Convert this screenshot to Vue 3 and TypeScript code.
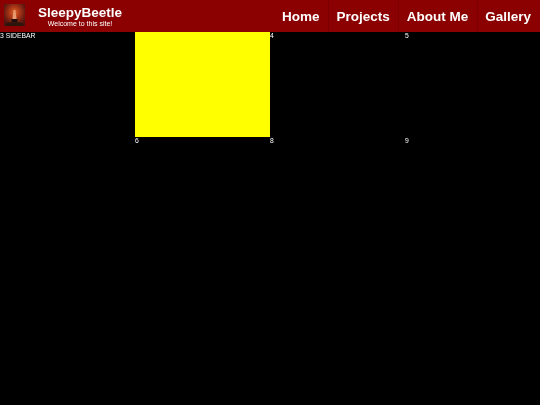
<script setup lang="ts">
const navItems: string[] = ['Home', 'Projects', 'About Me', 'Gallery']
</script>

<template>
  <div class="page">
    <header class="header">
      <svg class="logo" viewBox="0 0 21 22" role="img" aria-label="SleepyBeetle logo">
        <defs>
          <radialGradient id="glow" cx="50%" cy="38%" r="65%">
            <stop offset="0" stop-color="#e0682c" />
            <stop offset="0.35" stop-color="#b03a18" />
            <stop offset="0.75" stop-color="#6c1c10" />
            <stop offset="1" stop-color="#481410" />
          </radialGradient>
          <filter id="soft" x="-10%" y="-10%" width="120%" height="120%">
            <feGaussianBlur stdDeviation="0.7" />
          </filter>
        </defs>
        <rect width="21" height="22" fill="url(#glow)" />
        <g filter="url(#soft)">
          <path d="M9.6 6 L11.4 6 L12.6 15 L8.4 15 Z" fill="#e89a70" />
          <path d="M1 22 L4 18.5 L17 18.5 L20 22 Z" fill="#2a120c" />
          <rect x="7.5" y="15" width="6" height="3.5" fill="#221008" />
        </g>
      </svg>
      <div class="brand">
        <div class="title">SleepyBeetle</div>
        <div class="tagline">Welcome to this site!</div>
      </div>
      <nav class="nav">
        <a v-for="item in navItems" :key="item" class="nav-item">{{ item }}</a>
      </nav>
    </header>
    <main class="grid">
      <div class="cell sidebar">3 SIDEBAR</div>
      <div class="cell feature"></div>
      <div class="cell">4</div>
      <div class="cell">5</div>
      <div class="cell">6</div>
      <div class="cell">8</div>
      <div class="cell">9</div>
    </main>
  </div>
</template>

<style>
html, body { margin: 0; background: #000; }
</style>

<style scoped>
.page {
  width: 540px;
  height: 405px;
  overflow: hidden;
  background: #000;
  color: #fff;
  font-family: "Liberation Sans", Arial, sans-serif;
  will-change: transform;
}
.header {
  height: 32px;
  display: flex;
  align-items: center;
  background: #8b0000;
  padding-left: 4px;
  box-sizing: border-box;
}
.logo {
  width: 21px;
  height: 22px;
  flex: none;
  margin-bottom: 2px;
}
.brand {
  width: 110px;
  text-align: center;
}
.title {
  font-size: 13.5px;
  font-weight: bold;
  line-height: 15px;
}
.tagline {
  font-size: 7px;
  line-height: 8px;
}
.nav {
  margin-left: auto;
  height: 100%;
  display: flex;
}
.nav-item {
  display: flex;
  align-items: center;
  padding: 0 8.5px;
  font-size: 13.5px;
  font-weight: bold;
  box-shadow: inset 1px 0 0 #7d0000;
}
.nav-item:first-child {
  box-shadow: none;
}
.nav-item:last-child {
  padding-right: 9px;
}
.grid {
  display: grid;
  grid-template-columns: repeat(4, 135px);
  grid-template-rows: 105px auto;
}
.cell {
  font-size: 6.8px;
  line-height: 8px;
}
.sidebar {
  grid-row: span 2;
}
.feature {
  background: #ff0;
}
</style>
